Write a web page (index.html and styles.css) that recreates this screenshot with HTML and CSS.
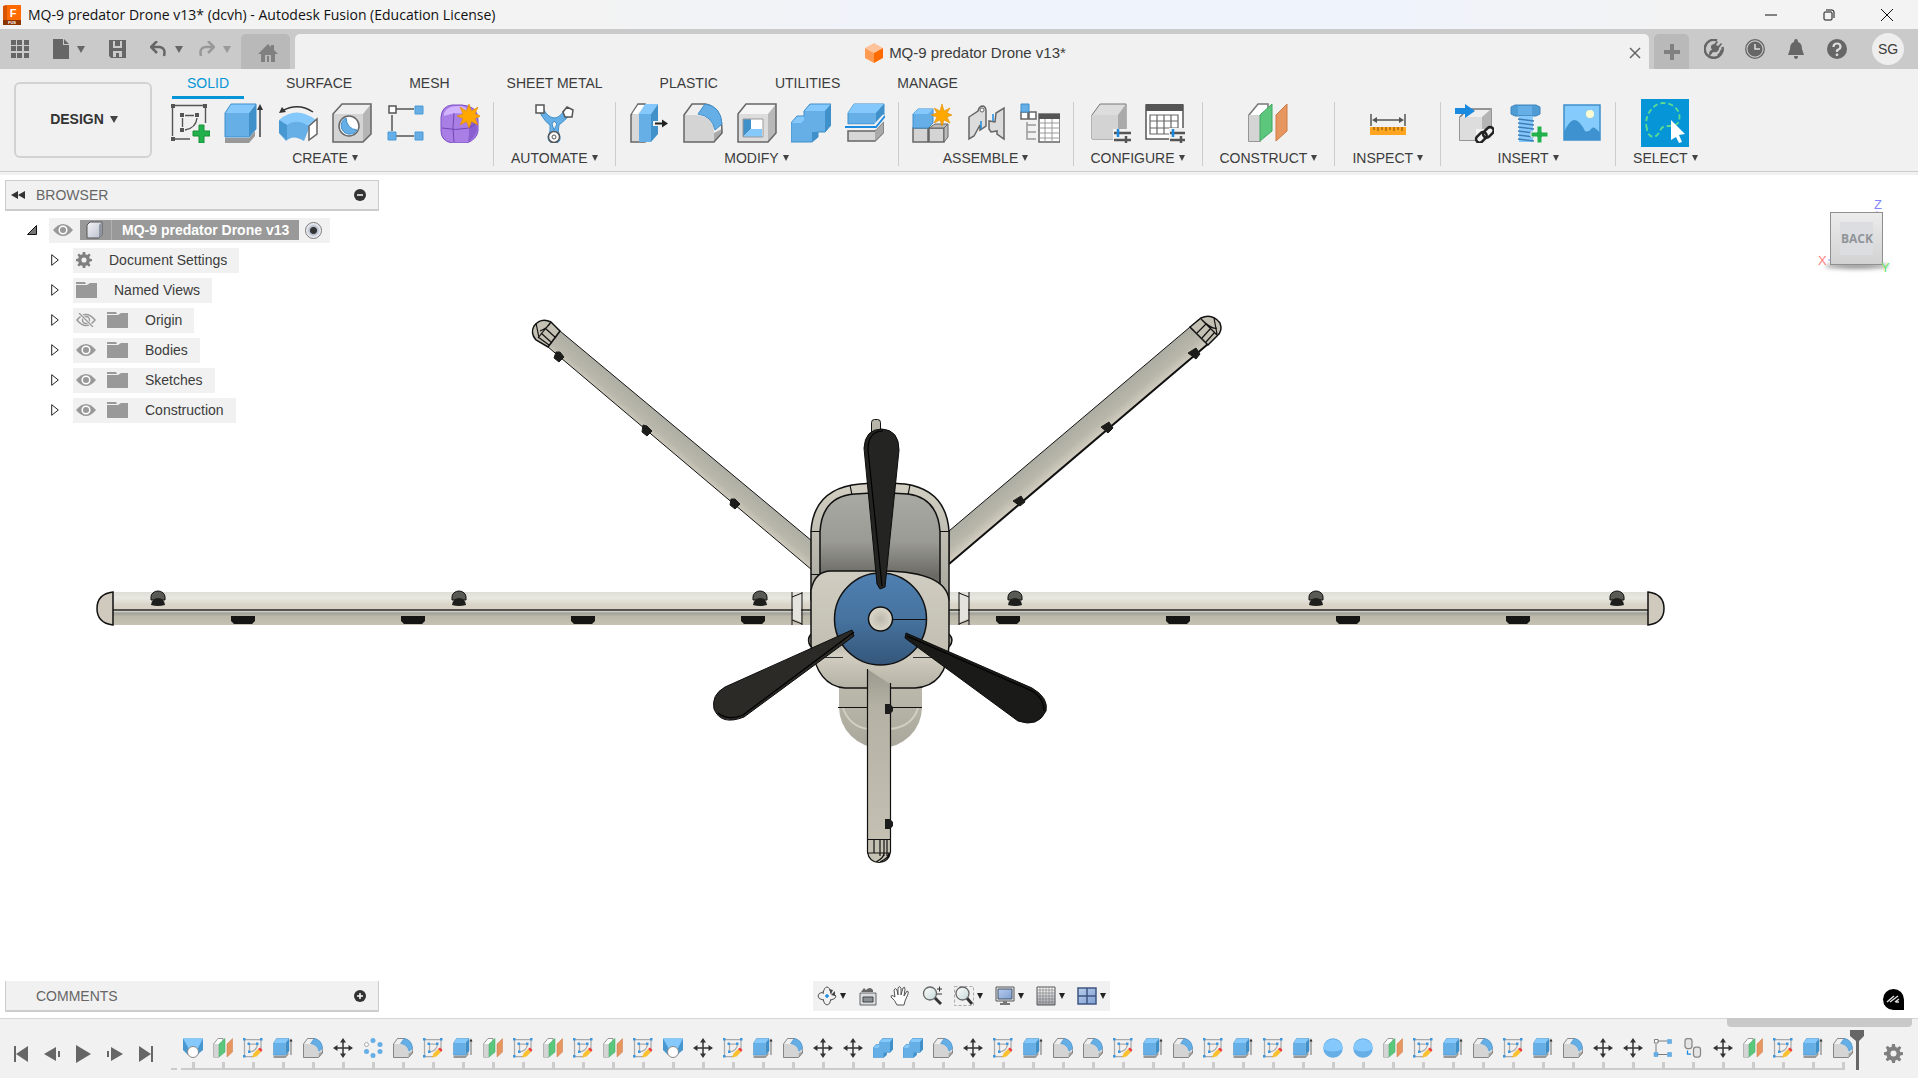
FILE: index.html
```html
<!DOCTYPE html>
<html lang="en">
<head>
    <meta charset="UTF-8">
    <meta name="viewport" content="width=device-width, initial-scale=1.0">
    <title>MQ-9 predator Drone v13* (dcvh) - Autodesk Fusion (Education License)</title>
    <link rel="stylesheet" href="styles.css">
</head>
<body>
    <!-- icon sprite -->
    <svg class="sprite" aria-hidden="true">
        <defs>
            <linearGradient id="gLens" x1="0" y1="0" x2="1" y2="1"><stop offset="0" stop-color="#fff"/><stop offset="1" stop-color="#c3d8d6"/></linearGradient>
            <linearGradient id="gScreen" x1="0" y1="0" x2="1" y2="1"><stop offset="0" stop-color="#b8cdec"/><stop offset="1" stop-color="#7f9fd2"/></linearGradient>
            <linearGradient id="gCube" x1="0" y1="0" x2="1" y2="1"><stop offset="0" stop-color="#f4f5f8"/><stop offset="1" stop-color="#b9bfcc"/></linearGradient>
            <linearGradient id="gGrid" x1="0" y1="0" x2="0" y2="1"><stop offset="0" stop-color="#fff"/><stop offset="1" stop-color="#a5a7b0"/></linearGradient>
        </defs>

        <symbol id="i-sketch" viewBox="0 0 40 40">
            <path d="M5 2.500H33M35.500 5V20M2.500 5V33M5 36H20M15 12.500H24M12.500 15V24M27 15Q26 25 15 27" fill="none" stroke="#555" stroke-width="1.400"/>
            <path d="M1 1h4v4h-4zM33 1h4v4h-4zM1 34h4v4h-4zM10 10h4v4h-4zM25 10h4v4h-4zM10 25h4v4h-4z" fill="#555"/>
            <path d="M29 22h5v6h6v5h-6v7h-5v-7h-6v-5h6z" fill="#22b14c" stroke="#169038"/>
        </symbol>
        <symbol id="i-extrude" viewBox="0 0 40 40">
            <path d="M1 35H25L31 28V33L25 40H1z" fill="#999"/>
            <path d="M1 10H25V34H1z" fill="#65aee6"/><path d="M1 10L7 1H32L25 10z" fill="#85c9fc"/><path d="M25 10L32 1V26L25 34z" fill="#4090ca"/>
            <path d="M1 10L7 1H32V26L25 34H1z" fill="none" stroke="#3f8fcb"/>
            <path d="M36 4V34" stroke="#333" stroke-width="1.400"/><path d="M36 1L39 7H33z" fill="#333"/>
        </symbol>
        <symbol id="i-revolve" viewBox="0 0 40 40">
            <path d="M1 18Q18 6 34 18L30 28L26 38Q15 31 8 38L1 30z" fill="#65aee6"/>
            <path d="M1 17Q18 2 38 17L31 23Q18 15 9 22z" fill="#85c9fc"/>
            <path d="M1 17L9 22V37L1 30z" fill="#4797d1"/>
            <path d="M31 23L39 16V31L31 37z" fill="#fff" stroke="#666" stroke-width="1.500"/>
            <path d="M4 8Q20 -1 35 9" fill="none" stroke="#333" stroke-width="1.500"/><path d="M1 10L4 4L8 9z" fill="#333"/>
        </symbol>
        <symbol id="i-hole" viewBox="0 0 40 40">
            <path d="M1 11L10 1H39V31L31 39H1z" fill="#eee"/><path d="M1 11H31V39H1z" fill="#d4d4d4"/><path d="M31 11L39 1V31L31 39z" fill="#b5b5b5"/>
            <path d="M1 11L10 1H39V31L31 39H1z" fill="none" stroke="#666" stroke-width="1.500"/>
            <circle cx="17" cy="23" r="10" fill="#fff" stroke="#666" stroke-width="1.500"/><path d="M14 15A8.500 8.500 0 1 0 25 27Q15 26 14 15z" fill="#65aee6" stroke="#3f8fcb"/>
        </symbol>
        <symbol id="i-pattern" viewBox="0 0 40 40">
            <path d="M10 6H28M6 12V28M10 33H28" stroke="#555" stroke-width="1.500"/><path d="M3 3h7v7h-7z" fill="#fff" stroke="#555" stroke-width="1.500"/>
            <path d="M29 3h8v8h-8zM2 29h8v8h-8zM29 29h8v8h-8z" fill="#65aee6" stroke="#4a9ad6"/>
        </symbol>
        <symbol id="i-form" viewBox="0 0 40 40">
            <path d="M1 14Q2 3 12 2H22Q38 3 38 17V28Q37 36 27 40H12Q1 38 1 28z" fill="#a97fe6" stroke="#7c4fc4"/>
            <path d="M4 10Q8 2 20 3Q30 4 25 11Q14 9 4 13z" fill="#d1b3ff"/><path d="M26 12Q38 15 37 27Q35 35 28 39Q31 25 26 12z" fill="#8a5fd0"/>
            <path d="M2 25Q16 28 29 25L37 20M14 10Q12 25 14 39" fill="none" stroke="#7346b5"/>
            <path d="M29 1L31.500 8L38 4L35 11L41 13L35 15.500L38 22L31.500 18.500L29 25L26.500 18.500L20 22L23 15.500L17 13L23 11L20 4L26.500 8z" fill="#ffa800" stroke="#e08a00" stroke-width=".6"/>
        </symbol>
        <symbol id="i-automate" viewBox="0 0 40 40">
            <path d="M5 8Q11 19 16 22Q17 28 14 34Q14 40 20 40Q27 40 26 34Q23 28 25 22Q30 18 36 12L30 7Q26 15 20 15Q13 14 9 5z" fill="#65aee6" stroke="#3f8fcb"/>
            <path d="M20 18L23 21L20 27L18 21z" fill="#f1f1f1" stroke="#3f8fcb"/>
            <circle cx="20" cy="34" r="5.500" fill="#fff" stroke="#555" stroke-width="1.500"/><circle cx="20" cy="34" r="2" fill="none" stroke="#555"/>
            <path d="M2 2h8v8h-8zM33 4L39 7L38 14L31 14L29 9z" fill="#fff" stroke="#555" stroke-width="1.500"/>
        </symbol>
        <symbol id="i-press" viewBox="0 0 40 40">
            <path d="M2 12L9 1H16V39H2z" fill="#d8d8d8" stroke="#666" stroke-width="1.500"/><path d="M3 11L9 2H16L9 11z" fill="#fff"/>
            <path d="M10 11H22V39H10z" fill="#65aee6"/><path d="M10 11L16 1H29L22 11z" fill="#85c9fc"/><path d="M22 11L29 1V31L22 39z" fill="#4090ca"/>
            <path d="M24 18h16v5H24z" fill="#f1f1f1"/><path d="M26 20.500H34" stroke="#222" stroke-width="2"/><path d="M33 16.500L39 20.500L33 24.500z" fill="#222"/>
        </symbol>
        <symbol id="i-fillet" viewBox="0 0 40 40">
            <path d="M1 12L9 1H22Q39 4 39 28L31 39H1z" fill="#efefef"/><path d="M1 12H13Q30 13 31 29V39H1z" fill="#d4d4d4"/>
            <path d="M31 30L39 26V30L31 39z" fill="#aaa"/><path d="M1 12L9 1H22Q39 4 39 28V30L31 39H1z" fill="none" stroke="#666" stroke-width="1.500"/>
            <path d="M15 11L22 1Q38 3 39 21L32 27Q29 13 15 11z" fill="#65aee6" stroke="#3f8fcb"/>
        </symbol>
        <symbol id="i-shell" viewBox="0 0 40 40">
            <path d="M1 11L9 1H39V30L31 39H1z" fill="#f5f5f5"/><path d="M1 11H31V39H1z" fill="#dcdcdc"/><path d="M31 11L39 1V30L31 39z" fill="#b8b8b8"/>
            <path d="M1 11L9 1H39V30L31 39H1z" fill="none" stroke="#666" stroke-width="1.500"/>
            <path d="M6 16H26V34H6z" fill="#fff"/><path d="M6 16H14V26L6 34z" fill="#4090ca"/><path d="M14 26H25V34H6z" fill="#85c9fc"/><path d="M6 16H26V34H6z" fill="none" stroke="#999"/>
        </symbol>
        <symbol id="i-combine" viewBox="0 0 40 40">
            <path d="M0 20L6 13H13V8L19 1H40V22L34 29H27V34L21 39H0z" fill="#65aee6"/>
            <path d="M13 8L19 1H40L34 8zM0 20L6 13H13V17L10 20z" fill="#85c9fc"/><path d="M34 8L40 1V22L34 29zM21 29H27V34L21 39z" fill="#4090ca"/>
            <path d="M0 20L6 13H13V8L19 1H40V22L34 29H27V34L21 39H0z" fill="none" stroke="#3f8fcb"/>
        </symbol>
        <symbol id="i-split" viewBox="0 0 40 40">
            <path d="M3 28H30L38 20V30L30 38H3z" fill="#d6d6d6" stroke="#666" stroke-width="1.500"/><path d="M30 28L38 20V30L30 38z" fill="#aaa"/>
            <path d="M3 10L9 1H39V13L31 21H3z" fill="#65aee6" stroke="#3f8fcb"/><path d="M3 10L9 1H39L31 10z" fill="#85c9fc"/><path d="M31 10L39 1V13L31 21z" fill="#4090ca"/>
            <path d="M0 24H30L40 13" fill="none" stroke="#f1f1f1" stroke-width="5"/><path d="M0 24H31L40 13" fill="none" stroke="#1a8ae0" stroke-width="1.800"/>
        </symbol>
        <symbol id="i-component" viewBox="0 0 40 40">
            <path d="M1 25H16V39H1zM17 25H32V39H17z" fill="#d4d4d4" stroke="#666" stroke-width="1.500"/><path d="M17 25L23 21H36L32 25zM32 25L36 21V34L32 39z" fill="#bbb" stroke="#666"/>
            <path d="M1 11L6 6H21V20L16 25H1z" fill="#65aee6" stroke="#3f8fcb"/><path d="M1 11L6 6H21L16 11z" fill="#85c9fc"/>
            <path d="M30 1L32 8L38 5L35 10L40 12L35 14L38 20L32 17L30 23L28 17L22 20L25 14L19 12L25 10L22 5L28 8z" fill="#ffa800" stroke="#e08a00" stroke-width=".6"/>
        </symbol>
        <symbol id="i-joint" viewBox="0 0 40 40">
            <path d="M3 14L12 8Q13 3 17 3Q20 4 20 8V23L14 27V22L8 33L3 36z" fill="#dcdcdc" stroke="#666" stroke-width="1.500"/><circle cx="16" cy="7" r="2" fill="#fff" stroke="#666"/>
            <path d="M38 5V36L31 31V28L25 29L23 26V18L29 19L30 10z" fill="#dcdcdc" stroke="#666" stroke-width="1.500"/><path d="M15 18V26M27 11V18" stroke="#1a8ae0" stroke-width="1.500"/>
        </symbol>
        <symbol id="i-bom" viewBox="0 0 40 40">
            <path d="M1 9H8V16H1zM9 9H16V16H9z" fill="#fff" stroke="#666" stroke-width="1.500"/><path d="M1 1H9V9H1z" fill="#65aee6" stroke="#3f8fcb"/>
            <path d="M7 19V36H16M7 22H16M7 29H16" fill="none" stroke="#999" stroke-width="1.500"/><path d="M19 11H40V39H19z" fill="#fff" stroke="#666" stroke-width="1.500"/><path d="M19 11H40V16H19z" fill="#555"/>
            <path d="M25 16V39M32 16V39M19 20H40M19 25H40M19 30H40M19 35H40" stroke="#999"/>
        </symbol>
        <symbol id="i-config" viewBox="0 0 40 40">
            <path d="M1 12L9 1H35V28L27 36H1z" fill="#ddd" stroke="#777"/><path d="M1 12H27V36H1z" fill="#d3d3d3"/><path d="M27 12L35 1V28L27 36z" fill="#aaa"/>
            <path d="M22 26h18v14H22z" fill="#f1f1f1"/><path d="M23 30H40M23 37H40M35 33V40" stroke="#555" stroke-width="2.500"/><path d="M27 26V34" stroke="#1a8ae0" stroke-width="2.500"/>
        </symbol>
        <symbol id="i-configtable" viewBox="0 0 40 40">
            <path d="M1 2H38V36H1z" fill="#fff" stroke="#555" stroke-width="1.500"/><path d="M1 1H38V8H1z" fill="#555"/><path d="M5 12H33V31H5zM5 18H33M5 25H33M12 12V31M19 12V31M26 12V31" fill="none" stroke="#666" stroke-width="1.200"/>
            <path d="M24 25h16v15H24z" fill="#f1f1f1"/><path d="M25 30H41M25 37H41M36 33V40" stroke="#555" stroke-width="2.500"/><path d="M28 26V34" stroke="#1a8ae0" stroke-width="2.500"/>
        </symbol>
        <symbol id="i-plane" viewBox="0 0 40 40">
            <path d="M1 12L10 1H20V12L12 38H1z" fill="#fff" stroke="#777" stroke-width="1.500"/><path d="M1 12H12V38H1z" fill="#d4d4d4"/>
            <path d="M12 12L24 1V28L12 38z" fill="#5cc67d" stroke="#3fa860"/><path d="M28 12L39 1V28L28 38z" fill="#e8965f" stroke="#cc7a45"/>
        </symbol>
        <symbol id="i-measure" viewBox="0 0 40 40">
            <path d="M3 11V23M37 11V23M6 17H34" stroke="#555" stroke-width="1.500"/><path d="M4 17L9 14V20zM36 17L31 14V20z" fill="#555"/>
            <path d="M2 24H38V32H2z" fill="#ffa51f"/><path d="M6 24v3M10 24v4M14 24v3M18 24v4M22 24v3M26 24v4M30 24v3M34 24v4" stroke="#7a4d00"/>
        </symbol>
        <symbol id="i-insert" viewBox="0 0 40 40">
            <path d="M6 14L14 6H37V28L28 37H6z" fill="#eee" stroke="#777" stroke-width="1.500"/><path d="M6 14H28V37H6z" fill="#ddd"/><path d="M28 14L37 6V28L28 37z" fill="#b5b5b5"/>
            <path d="M1 5H11V1L21 8L11 15V11H1z" fill="#1a8ae0"/>
            <path d="M22 26h18v14H22z" fill="#f1f1f1"/><g fill="none" stroke="#222" stroke-width="2.600"><rect x="21" y="31" width="12" height="7" rx="3.500" transform="rotate(-45 27 34)"/><rect x="28" y="26" width="12" height="7" rx="3.500" transform="rotate(-45 34 29)"/></g>
        </symbol>
        <symbol id="i-bolt" viewBox="0 0 40 40">
            <path d="M3 4L7 2H28L32 4V11L28 13H7L3 11z" fill="#4f9bd3" stroke="#3f85bd"/><path d="M10 3H24V12H10z" fill="#65aee6"/><path d="M11 13H25V39H11z" fill="#85c9fc"/>
            <path d="M10 16L26 18M10 20L26 22M10 24L26 26M10 28L26 30M10 32L26 34M10 36L26 38" stroke="#3f7eb5" stroke-width="1.500"/>
            <path d="M29 23h5v6h6v5h-6v6h-5v-6h-6v-5h6z" fill="#22b14c" stroke="#f1f1f1"/>
        </symbol>
        <symbol id="i-picture" viewBox="0 0 40 40">
            <path d="M2 2H38V37H2z" fill="#85cbfc" stroke="#3f8fcb" stroke-width="1.500"/><path d="M2 29Q8 16 13 17Q18 18 23 28Q26 30 30 25Q32 23 38 30V37H2z" fill="#3d92cf"/><circle cx="28" cy="11" r="4" fill="#fffbd0"/>
        </symbol>
        <symbol id="i-select" viewBox="0 0 48 48">
            <path d="M0 0H48V48H0z" fill="#0696d7"/><path d="M6 30C2 18 12 4 22 4C34 4 42 14 37 24C32 30 24 24 20 30C14 44 6 36 6 30z" fill="none" stroke="#5fdc8f" stroke-width="1.800" stroke-dasharray="5 3"/>
            <path d="M30 21L44 35L38 36L41 43L38 44L35 38L30 41z" fill="#fff"/>
        </symbol>

        <!-- timeline only -->
        <symbol id="i-tsketch" viewBox="0 0 40 40">
            <path d="M2 3H36V22M3 3V37H22M10 12H30M13 12V28Q28 26 29 12" fill="none" stroke="#aaa" stroke-width="2.500"/>
            <path d="M0 0h5v5h-5zM34 0h5v5h-5zM0 34h5v5h-5zM9 9h5v5h-5zM26 9h5v5h-5zM10 25h5v5h-5z" fill="#3b98e0"/>
            <path d="M18 39L21 31L30 22L36 28L27 37z" fill="#fbc02d"/><path d="M30 22L34 19L39 24L36 28z" fill="#f03c3c"/>
        </symbol>
        <symbol id="i-loft" viewBox="0 0 40 40">
            <path d="M0 1H40V24L28 34H10L0 24z" fill="#4797d1"/><path d="M0 1H40L29 22H12z" fill="#85c9fc"/><circle cx="20" cy="28" r="11" fill="#fff" stroke="#888" stroke-width="2"/>
        </symbol>
        <symbol id="i-move" viewBox="0 0 40 40">
            <path d="M20 5V35M5 20H35" stroke="#333" stroke-width="3"/><path d="M20 0L26 9H14zM20 40L14 31H26zM0 20L9 14V26zM40 20L31 26V14z" fill="#333"/>
        </symbol>
        <symbol id="i-circ" viewBox="0 0 40 40">
            <g fill="#65aee6"><circle cx="20" cy="5" r="5"/><circle cx="34" cy="13" r="5"/><circle cx="34" cy="27" r="5"/><circle cx="20" cy="35" r="5"/><circle cx="7" cy="27" r="5"/></g><circle cx="7" cy="13" r="4" fill="#fff" stroke="#aaa" stroke-width="2"/>
        </symbol>
        <symbol id="i-dome" viewBox="0 0 40 40">
            <circle cx="20" cy="20" r="19.500" fill="#65aee6"/><path d="M0.500 22A19.500 19.500 0 0 1 39.500 22Q20 32 0.500 22z" fill="#85c9fc"/>
        </symbol>
        <symbol id="i-align" viewBox="0 0 40 40">
            <rect x="4" y="1" width="14" height="20" rx="5" fill="#e5e5e5" stroke="#888" stroke-width="2.500"/><rect x="21" y="18" width="14" height="20" rx="5" fill="#e5e5e5" stroke="#888" stroke-width="2.500"/>
            <path d="M9 25V32H16" fill="none" stroke="#1a8ae0" stroke-width="2.500"/>
        </symbol>

        <symbol id="i-gear" viewBox="0 0 20 20">
            <path fill-rule="evenodd" d="M8.500 0H11.500L12 3L14 3.900L16.400 2L18.300 4L16.500 6.300L17.200 8.300L20 8.600V11.500L17.200 12L16.400 14L18.200 16.400L16.200 18.300L13.900 16.600L12 17.300L11.500 20H8.500L8 17.300L6 16.500L3.700 18.200L1.700 16.200L3.500 13.900L2.700 12L0 11.500V8.600L2.700 8.200L3.500 6.200L1.800 3.900L3.800 1.900L6.100 3.600L8 2.800zM10 6.800A3.200 3.200 0 1 0 10 13.200A3.200 3.200 0 1 0 10 6.800z" fill="currentColor"/>
        </symbol>
        <symbol id="i-eye" viewBox="0 0 20 14">
            <path d="M0 7Q10 -5 20 7Q10 19 0 7z" fill="#999"/><circle cx="10" cy="7" r="3.800" fill="none" stroke="#fff" stroke-width="1.500"/>
        </symbol>
        <symbol id="i-eyeoff" viewBox="0 0 20 14">
            <path d="M1 7Q10 -4 19 7Q10 18 1 7z" fill="none" stroke="#999" stroke-width="1.500"/><circle cx="10" cy="7" r="3.500" fill="none" stroke="#999" stroke-width="1.500"/><path d="M3 0L17 14" stroke="#f1f1f1" stroke-width="3"/><path d="M3 0L17 14" stroke="#999" stroke-width="1.300"/>
        </symbol>
        <symbol id="i-folder" viewBox="0 0 21 16">
            <path d="M0 0H9L10 2H0zM0 3H11L14 1H21V16H0z" fill="#999"/>
        </symbol>
    </svg>

    <header class="titlebar">
        <svg class="app-logo" viewBox="0 0 18 20"><path d="M0 1L5 0H18V20H0z" fill="#ff6b00"/><path d="M0 1L4 0V20H0z" fill="#d95400"/><path d="M0 15H18V20H0z" fill="#8c3500"/><text x="10" y="12" class="logo-f">F</text><text x="9" y="19" class="logo-s">FUS</text></svg>
        <span class="title-text">MQ-9 predator Drone v13* (dcvh) - Autodesk Fusion (Education License)</span>
        <button class="win-button" aria-label="Minimize"><svg viewBox="0 0 12 12"><path d="M0 6H12"/></svg></button>
        <button class="win-button" aria-label="Restore"><svg viewBox="0 0 12 12"><rect x="1" y="3" width="8" height="8" rx="1"/><path d="M3 1H9Q11 1 11 3V9"/></svg></button>
        <button class="win-button" aria-label="Close"><svg viewBox="0 0 12 12"><path d="M0 0L12 12M12 0L0 12"/></svg></button>
    </header>

    <div class="tabbar">
        <div class="quick">
            <button aria-label="Data panel"><svg width="18" height="18" viewBox="0 0 18 18"><path d="M0 0h5v5H0zM6 0h5v5H6zM13 0h5v5h-5zM0 6h5v5H0zM6 6h5v5H6zM13 6h5v5h-5zM0 13h5v5H0zM6 13h5v5H6zM13 13h5v5h-5z" fill="#666"/></svg></button>
            <button class="q-file" aria-label="File"><svg width="16" height="20" viewBox="0 0 16 20"><path d="M0 0H10V6H16V20H0zM11 0L16 5H11z" fill="#666"/></svg><i class="caret"></i></button>
            <button class="q-save" aria-label="Save"><svg width="17" height="18" viewBox="0 0 17 18"><path fill-rule="evenodd" d="M0 0H17V18H2L0 16zM4 1V8H13V1zM4 11V17H13V11z" fill="#666"/><path d="M6 1h5v5H6zM7 13h3v5H7z" fill="#666"/></svg></button>
            <button class="q-undo" aria-label="Undo"><svg width="17" height="16" viewBox="0 0 17 16"><path d="M1 6H10Q16 7 14 15M7 0L1 6L7 12" fill="none" stroke="#666" stroke-width="2.500"/></svg><i class="caret"></i></button>
            <button class="q-redo" aria-label="Redo"><svg width="17" height="16" viewBox="0 0 17 16"><path d="M16 6H7Q1 7 3 15M10 0L16 6L10 12" fill="none" stroke="#999" stroke-width="2.500"/></svg><i class="caret"></i></button>
        </div>
        <button class="home-tab" aria-label="Home"><svg width="20" height="18" viewBox="0 0 20 18"><path d="M10 0L13 3V1H16V6L20 10H17V18H13V11H7V18H3V10H0z" fill="#808080"/><path d="M9 12h2v6H9z" fill="#808080"/></svg></button>
        <div class="doc-tab">
            <div class="doc-name">
                <svg width="18" height="20" viewBox="0 0 18 20"><path d="M9 0L18 5L9 10L0 5z" fill="#ffc39b"/><path d="M0 5L9 10V20L0 15z" fill="#ff9a52"/><path d="M18 5L9 10V20L18 15z" fill="#ff6b00"/></svg>
                <span>MQ-9 predator Drone v13*</span>
            </div>
            <button class="doc-close" aria-label="Close tab"><svg width="12" height="12" viewBox="0 0 12 12"><path d="M1 1L11 11M11 1L1 11" stroke="#666" stroke-width="1.500"/></svg></button>
        </div>
        <button class="new-tab" aria-label="New tab"><svg width="16" height="16" viewBox="0 0 16 16"><path d="M6 0h4v6h6v4h-6v6H6v-6H0V6h6z" fill="#808080"/></svg></button>
        <div class="tray">
            <button aria-label="Extensions"><svg width="20" height="20" viewBox="0 0 20 20"><path d="M13 1.500A9 9 0 1 0 18.500 8" fill="none" stroke="#666" stroke-width="2.500"/><path d="M5 16Q5 11 8 11Q5 6 10 5L13 2L14 3L12 6L14 7L17 4L18 5L15 9Q15 14 9 13L6 17z" fill="#666"/><path d="M14 17Q17 15 18 11" stroke="#666" stroke-width="3" fill="none"/></svg></button>
            <button aria-label="Job status"><svg width="20" height="20" viewBox="0 0 20 20"><circle cx="10" cy="10" r="9.300" fill="none" stroke="#666" stroke-width="1.300"/><circle cx="10" cy="10" r="7.500" fill="#666"/><path d="M10 5V10H15" fill="none" stroke="#ddd" stroke-width="1.500"/></svg></button>
            <button aria-label="Notifications"><svg width="20" height="20" viewBox="0 0 20 20"><path d="M10 0Q12 0 12 3Q16 4 16 10L18 16H2L4 10Q4 4 8 3Q8 0 10 0zM8 17H12Q12 20 10 20T8 17z" fill="#666"/></svg></button>
            <button aria-label="Help"><svg width="20" height="20" viewBox="0 0 20 20"><circle cx="10" cy="10" r="10" fill="#666"/><path d="M6.500 8Q6.500 4.500 10 4.500T13.500 8Q13.500 9.500 10 11.500V13" fill="none" stroke="#ddd" stroke-width="2.200"/><circle cx="10" cy="15.800" r="1.400" fill="#ddd"/></svg></button>
        </div>
        <button class="avatar">SG</button>
    </div>

    <div class="ribbon">
        <button class="workspace">DESIGN <i class="caret"></i></button>
        <div class="ribbon-body">
            <nav class="ribbon-tabs">
                <a href="#" class="active">SOLID</a>
                <a href="#">SURFACE</a>
                <a href="#">MESH</a>
                <a href="#">SHEET METAL</a>
                <a href="#">PLASTIC</a>
                <a href="#">UTILITIES</a>
                <a href="#">MANAGE</a>
            </nav>
            <div class="groups" id="groups"></div>
        </div>
    </div>

    <main class="canvas">
        <svg class="drone" viewBox="90 310 1580 560" role="img" aria-label="Drone model, back view">
            <defs>
                <linearGradient id="wing" x1="0" y1="0" x2="0" y2="1">
                    <stop offset="0" stop-color="#dfddd6"/><stop offset=".18" stop-color="#e8e8e2"/><stop offset=".38" stop-color="#dad5c8"/><stop offset=".53" stop-color="#d6d1c3"/><stop offset=".58" stop-color="#dad8d0"/><stop offset=".64" stop-color="#9fa097"/><stop offset=".74" stop-color="#bbb8aa"/><stop offset="1" stop-color="#c6c1b3"/>
                </linearGradient>
                <linearGradient id="armL" gradientUnits="userSpaceOnUse" x1="690" y1="440" x2="675" y2="458"><stop offset="0" stop-color="#aeaea4"/><stop offset=".6" stop-color="#b9b7ab"/><stop offset="1" stop-color="#d2cdc0"/></linearGradient>
                <linearGradient id="armR" gradientUnits="userSpaceOnUse" x1="1069" y1="429" x2="1085" y2="448"><stop offset="0" stop-color="#acaca2"/><stop offset=".6" stop-color="#b9b7ab"/><stop offset="1" stop-color="#d2cdc0"/></linearGradient>
                <linearGradient id="bay" x1="0" y1="0" x2="0" y2="1"><stop offset="0" stop-color="#aaaaa4"/><stop offset=".5" stop-color="#9b9b95"/><stop offset=".85" stop-color="#6b6a64"/></linearGradient>
                <linearGradient id="rim" x1="0" y1="0" x2="0" y2="1"><stop offset="0" stop-color="#d3cfc3"/><stop offset="1" stop-color="#a7a79d"/></linearGradient>
                <linearGradient id="body" x1="0" y1="0" x2="0" y2="1"><stop offset="0" stop-color="#d0ccc1"/><stop offset=".65" stop-color="#c3c0b3"/><stop offset=".72" stop-color="#d2cec1"/><stop offset="1" stop-color="#b4b2a4"/></linearGradient>
                <linearGradient id="hub" x1="0" y1="0" x2="0" y2="1"><stop offset="0" stop-color="#4f80b1"/><stop offset=".5" stop-color="#46739f"/><stop offset="1" stop-color="#35567a"/></linearGradient>
                <linearGradient id="pod" x1="0" y1="0" x2="0" y2="1"><stop offset="0" stop-color="#bdbaad"/><stop offset="1" stop-color="#a9a79b"/></linearGradient>
                <linearGradient id="boom" x1="0" y1="0" x2="0" y2="1"><stop offset="0" stop-color="#9b998e"/><stop offset=".2" stop-color="#b5b2a5"/><stop offset="1" stop-color="#c6c3b5"/></linearGradient>
                <radialGradient id="cone"><stop offset="0" stop-color="#bdb9ab"/><stop offset="1" stop-color="#dcd8cb"/></radialGradient>
                <g id="knob"><path d="M-7 1V-2A7 6 0 0 1 7 -2V1z" fill="#5a5a55" stroke="#111"/><path d="M-7 6Q-6 -1 0 -1T7 6Q0 8 -7 6z" fill="#1e1e1c"/></g>
                <path id="pad" d="M-12 0H12V5L9 8H-9L-12 5z" fill="#151613"/>
            </defs>

            <!-- wings -->
            <rect x="113" y="592" width="698" height="33" fill="url(#wing)"/>
            <rect x="949" y="592" width="699" height="33" fill="url(#wing)"/>
            <path d="M113 610H811M949 610H1648" stroke="#2a2a28" stroke-width="1.500"/>
            <path d="M113 592V625Q97 623 97 608.500T113 592zM1648 592V625Q1664 623 1664 608.500T1648 592z" fill="#cfcabd" stroke="#111" stroke-width="1.500"/>
            <path d="M792 592V625M802 592V625M959 592V625M969 592V625M792 597L802 593M792 620L802 624M969 597L959 593M969 620L959 624" stroke="#111"/>
            <path d="M793 598L801 595V622L793 619zM968 598L960 595V622L968 619z" fill="#e4e3dd"/>
            <use href="#knob" x="158" y="599"/><use href="#knob" x="459" y="599"/><use href="#knob" x="760" y="599"/>
            <use href="#knob" x="1015" y="599"/><use href="#knob" x="1316" y="599"/><use href="#knob" x="1617" y="599"/>
            <use href="#pad" x="243" y="616"/><use href="#pad" x="413" y="616"/><use href="#pad" x="583" y="616"/><use href="#pad" x="753" y="616"/>
            <use href="#pad" x="1008" y="616"/><use href="#pad" x="1178" y="616"/><use href="#pad" x="1348" y="616"/><use href="#pad" x="1518" y="616"/>

            <!-- tail arms -->
            <path d="M560 331L812 541V570L548 347z" fill="url(#armL)" stroke="#111"/>
            <path d="M560 331L551 322Q541 317 534 326Q530 333 536 340L548 347z" fill="#c4c1b4" stroke="#111" stroke-width="1.500"/>
            <path d="M550 323L538 338M545 328L556 338M541 333L552 343M538 337L549 345M536 323L539 338M540 331Q548 328 551 322" fill="none" stroke="#111" stroke-width="1.200"/>
            <path d="M1190 327L949 531V564L1208 344z" fill="url(#armR)" stroke="#111"/><path d="M949 564L1208 344" stroke="#111" stroke-width="2"/>
            <path d="M1190 327L1201 318Q1212 313 1220 323Q1223 331 1217 336L1208 345z" fill="#c4c1b4" stroke="#111" stroke-width="1.500"/>
            <path d="M1201 319L1217 335M1206 324L1197 333M1211 328L1202 338M1215 332L1206 342M1214 318L1217 334M1201 319Q1212 330 1217 328" fill="none" stroke="#111" stroke-width="1.200"/>
            <path d="M556 352L560 352L564 357L559 362L554 358zM643 425L647 426L652 431L647 436L642 432zM731 499L735 499L740 504L735 509L730 505zM1188 353L1196 348L1200 354L1196 359zM1101 427L1109 422L1113 428L1108 433zM1013 501L1021 496L1025 502L1020 506z" fill="#1c1d1a" stroke="#1c1d1a"/>

            <!-- pod and fuselage -->
            <path d="M839 685H922V707A41.500 41 0 0 1 839 707z" fill="url(#pod)"/>
            <path d="M843 708Q850 727 868 729M890 729Q912 727 918 708" fill="none" stroke="#d2cfc3" stroke-width="2"/>
            <path d="M838 707.500H922" stroke="#111"/>
            <path d="M811 634Q806 640 811 647M949 634Q955 640 949 647" fill="#b5b2a5" stroke="#111" stroke-width="1.500"/>
            <rect x="871.500" y="419.500" width="9" height="30" rx="3" fill="#b7b5a9" stroke="#111"/>
            <path d="M811 600V531Q814 488 860 484Q880 482 905 484Q946 490 949 531V600z" fill="url(#rim)" stroke="#111" stroke-width="1.500"/>
            <path d="M820 580V532Q822 496 855 494Q880 492 908 494Q938 498 940 532V590z" fill="url(#bay)" stroke="#111" stroke-width="1.500"/>
            <path d="M811 531.500H820M940 531.500H949M811 574.500H820M850 485L852 495M910 485L908 495" stroke="#111" stroke-width="1.200"/>
            <path d="M811 590Q815 571 831 571H885Q946 572 949 600V645Q947 686 915 688H845Q817 686 811 645z" fill="url(#body)" stroke="#111" stroke-width="1.500"/>
            <path d="M823 657.500H843M913 657.500H940" stroke="#333"/>

            <!-- lower boom -->
            <path d="M867 669L890 684V853Q889 863 879 863T867 853z" fill="url(#boom)"/>
            <path d="M867.500 669V852Q869 862 879 862.500Q889 862 890.500 852V683M867 839.500H890M867 853H890M874 839V853M880 839V856M884 839V856M887 839V856M876 862Q884 858 884 853M880 862Q889 858 889 853" fill="none" stroke="#111" stroke-width="1.200"/>
            <path d="M885 704H890L893 707V711L890 714H885zM885 819H890L893 822V826L890 829H885z" fill="#1c1d1a"/>

            <!-- propeller -->
            <circle cx="880.500" cy="619" r="46" fill="url(#hub)" stroke="#111" stroke-width="1.500"/>
            <path d="M892 619.500H926" stroke="#111"/>
            <circle cx="880.500" cy="619" r="12" fill="url(#cone)" stroke="#111" stroke-width="1.500"/>
            <path d="M864 448Q865 429 882 429Q899 430 899 450L885 587L880 589L877 584z" fill="#242422" stroke="#0c0c0c"/>
            <path d="M868 450Q868 431 883 431M868 450L882 586" fill="none" stroke="#000" stroke-width="1.200"/>
            <path d="M852 630L725 687Q711 695 714 709Q721 726 744 717L854 636z" fill="#2b2a27" stroke="#0c0c0c"/>
            <path d="M854 632L743 715Q728 721 718 713" fill="none" stroke="#000" stroke-width="1.200"/>
            <path d="M906 633L1032 688Q1049 698 1046 711Q1038 728 1018 721L905 638z" fill="#1a1a18" stroke="#0c0c0c"/>
            <path d="M907 636L1032 691Q1044 698 1044 711" fill="none" stroke="#000" stroke-width="1.200"/>
        </svg>

        <svg class="viewcube" viewBox="0 0 90 90" role="img" aria-label="View cube">
            <defs><linearGradient id="face" x1="0" y1="0" x2="0" y2="1"><stop offset="0" stop-color="#ececec"/><stop offset="1" stop-color="#d2d2d2"/></linearGradient><filter id="soft" x="-20%" width="140%" y="-100%" height="300%"><feGaussianBlur stdDeviation="2"/></filter></defs>
            <ellipse cx="42" cy="71" rx="32" ry="3" fill="#999" filter="url(#soft)"/>
            <path d="M62 16V20M13 65h4" stroke="#99f"/>
            <rect x="15.500" y="17.500" width="52" height="52" fill="url(#face)" stroke="#8f8f8f"/>
            <rect x="25" y="27" width="33" height="33" fill="#dcdde0"/>
            <text x="42" y="48" class="face">BACK</text>
            <text x="59" y="14" fill="#8585ff">Z</text><text x="3" y="70" fill="#ff8080">X</text><text x="66" y="77" fill="#6be86b">Y</text>
        </svg>

        <aside class="browser">
            <div class="panel-head">
                <button class="collapse" aria-label="Collapse"><svg width="14" height="8" viewBox="0 0 14 8"><path d="M7 0V8L0 4zM14 0V8L7 4z" fill="#333"/></svg></button>
                <h2>BROWSER</h2>
                <button class="round" aria-label="Hide panel"><svg width="12" height="12" viewBox="0 0 12 12"><circle cx="6" cy="6" r="6" fill="#333"/><path d="M3 6H9" stroke="#fff" stroke-width="1.500"/></svg></button>
            </div>
            <div class="node root">
                <button class="twist" aria-label="Collapse"><svg width="10" height="10" viewBox="0 0 10 10"><path d="M9.500 .5V9.500H.5z" fill="#777" stroke="#111"/></svg></button>
                <div class="chip">
                    <button class="eye" aria-label="Toggle visibility"><svg width="20" height="14"><use href="#i-eye"/></svg></button>
                    <div class="root-name">
                        <svg width="17" height="18" viewBox="0 0 17 18"><path d="M1 4L4 1H16V14L13 17H1z" fill="url(#gCube)" stroke="#555"/><path d="M13 17V4L16 1V14z" fill="#8f95a3"/></svg>
                        <span>MQ-9 predator Drone v13</span>
                    </div>
                    <input type="radio" name="active" aria-label="Activate component" checked>
                </div>
            </div>
            <ul class="tree" id="tree"></ul>
        </aside>

        <div class="canvas-foot">
            <div class="comments panel-head">
                <h2>COMMENTS</h2>
                <button class="round" aria-label="Show comments"><svg width="12" height="12" viewBox="0 0 12 12"><circle cx="6" cy="6" r="6" fill="#333"/><path d="M3 6H9M6 3V9" stroke="#fff" stroke-width="1.500"/></svg></button>
            </div>
            <div class="navbar">
                <button aria-label="Orbit"><svg viewBox="0 0 20 20"><g fill="none" stroke="#555"><path d="M6 8Q7 1 10 1T14 8M6 13Q7 19 10 19T14 13"/><path d="M6 6Q1 7 1 10T6 14M14 14Q19 13 19 10L16 7"/></g><path d="M10 8v4M8 10h4" stroke="#1a8ae0" stroke-width="1.500"/><path d="M12 3L16 4L14 8zM14 9L18 5V10z" fill="#444"/></svg><i class="caret"></i></button>
                <button aria-label="Look at"><svg viewBox="0 0 20 20"><path d="M2 7H18V19H2z" fill="#d9dcdf" stroke="#666"/><path d="M5 11H15V16H5z" fill="#8a8f96" stroke="#444"/><path d="M3 6L6 2L8 4Q12 0 15 4V6z" fill="#666"/></svg></button>
                <button aria-label="Pan"><svg viewBox="0 0 20 20"><path d="M7 19Q5 14 1 11Q1 8 5 11L4 4Q5 1 7 4L8 9V2Q9 -1 11 2V9L13 2Q15 0 15 3L14 10L17 5Q19 5 18 8L15 15L14 19z" fill="#fff" stroke="#555"/></svg></button>
                <button aria-label="Zoom"><svg viewBox="0 0 20 20"><path d="M12 11L19 18" stroke="#333" stroke-width="3"/><circle cx="8" cy="7.500" r="6.500" fill="url(#gLens)" stroke="#666" stroke-width="1.300"/><path d="M15 3H20M17.500 .5V5.500M15 8H20" stroke="#333"/></svg></button>
                <button aria-label="Fit"><svg viewBox="0 0 20 20"><path d="M.5 .5H19.500V19.500H.5z" fill="none" stroke="#aaa" stroke-dasharray="3 2"/><path d="M12 11L18 18" stroke="#333" stroke-width="3"/><circle cx="8.500" cy="7.500" r="6.500" fill="url(#gLens)" stroke="#666" stroke-width="1.300"/></svg><i class="caret"></i></button>
                <button aria-label="Display settings"><svg viewBox="0 0 20 20"><path d="M1 1H19V15H1z" fill="#e5e7ea" stroke="#555"/><path d="M3 3H17V13H3z" fill="url(#gScreen)" stroke="#456"/><path d="M8 15H12V17H15V19H5V17H8z" fill="#777"/></svg><i class="caret"></i></button>
                <button aria-label="Grid and snaps"><svg viewBox="0 0 20 20"><path d="M1 1H19V19H1z" fill="url(#gGrid)" stroke="#555"/><path d="M4 1V19M7 1V19M10 1V19M13 1V19M16 1V19M1 4H19M1 7H19M1 10H19M1 13H19M1 16H19" stroke="#777" stroke-width=".6"/></svg><i class="caret"></i></button>
                <button aria-label="Viewports"><svg viewBox="0 0 20 20"><path d="M1 2H19V18H1z" fill="url(#gScreen)" stroke="#3f5580" stroke-width="1.500"/><path d="M10 2V18M1 10H19" stroke="#3f5580" stroke-width="1.500"/></svg><i class="caret"></i></button>
            </div>
            <button class="assistant" aria-label="Autodesk Assistant"><svg width="21" height="21" viewBox="0 0 21 21"><path d="M10.500 0A10.500 10.500 0 0 1 21 10.500V21H10.500A10.500 10.500 0 0 1 10.500 0z" fill="#000"/><path d="M4 13L11 7M7 13L15 7M12 13L16 10M13 13h3" stroke="#ddd" stroke-width="1.500"/></svg></button>
        </div>
    </main>

    <footer class="timeline">
        <div class="playback">
            <button aria-label="Go to start"><svg width="14" height="16" viewBox="0 0 14 16"><path d="M0 0h2v16H0zM14 0V16L2 8z"/></svg></button>
            <button aria-label="Step back"><svg width="16" height="14" viewBox="0 0 16 14"><path d="M12 0V14L0 7zM14 4h2v6h-2z"/></svg></button>
            <button aria-label="Play"><svg width="15" height="18" viewBox="0 0 15 18"><path d="M0 0L15 9L0 18z"/></svg></button>
            <button aria-label="Step forward"><svg width="16" height="14" viewBox="0 0 16 14"><path d="M4 0V14L16 7zM0 4h2v6H0z"/></svg></button>
            <button aria-label="Go to end"><svg width="14" height="16" viewBox="0 0 14 16"><path d="M12 0h2v16h-2zM0 0V16L12 8z"/></svg></button>
        </div>
        <div class="dashes"></div>
        <div class="track" id="track"></div>
        <svg class="marker" width="14" height="40" viewBox="0 0 14 40"><path d="M0 0H14V6L9 11V40H6V11L0 6z" fill="#666"/></svg>
        <button class="settings" aria-label="Timeline settings"><svg width="19" height="19"><use href="#i-gear"/></svg></button>
        <div class="scrollbar"></div>
    </footer>

    <script>
        const groups = [
            ['CREATE', ['sketch', 'extrude', 'revolve', 'hole', 'pattern', 'form']],
            ['AUTOMATE', ['automate']],
            ['MODIFY', ['press', 'fillet', 'shell', 'combine', 'split']],
            ['ASSEMBLE', ['component', 'joint', 'bom']],
            ['CONFIGURE', ['config', 'configtable']],
            ['CONSTRUCT', ['plane']],
            ['INSPECT', ['measure']],
            ['INSERT', ['insert', 'bolt', 'picture']],
            ['SELECT', ['select']]
        ];

        document.getElementById('groups').innerHTML = groups.map(([name, icons]) => `
            <div class="group">
                <div class="group-icons">${icons.map(i => `<button class="tool tool-${i}" aria-label="${i}"><svg><use href="#i-${i}"/></svg></button>`).join('')}</div>
                <button class="group-label">${name} <i class="caret"></i></button>
            </div>`).join('');

        const nodes = [
            ['Document Settings', 'gear', null],
            ['Named Views', 'folder', null],
            ['Origin', 'folder', 'eyeoff'],
            ['Bodies', 'folder', 'eye'],
            ['Sketches', 'folder', 'eye'],
            ['Construction', 'folder', 'eye']
        ];

        document.getElementById('tree').innerHTML = nodes.map(([name, icon, eye]) => `
            <li class="node">
                <button class="twist" aria-label="Expand ${name}"><svg width="8" height="12" viewBox="0 0 8 12"><path d="M.7 .7V11.300L7.300 6z" fill="#fff" stroke="#222"/></svg></button>
                <div class="chip">
                    ${eye ? `<button class="eye" aria-label="Toggle ${name}"><svg width="20" height="14"><use href="#i-${eye}"/></svg></button>` : ''}
                    <svg class="node-icon ${icon}"><use href="#i-${icon}"/></svg><span>${name}</span>
                </div>
            </li>`).join('');

        // one letter per feature in the history
        const features = { l: 'loft', p: 'plane', s: 'tsketch', e: 'extrude', f: 'fillet', m: 'move', c: 'circ', b: 'combine', d: 'dome', r: 'pattern', a: 'align' };
        const history = 'lpsefmcfsepspspslmsefmmbbfmseffsefsesedd' + 'psefsefmmramps' + 'ef';

        document.getElementById('track').innerHTML = [...history].map(k =>
            `<button aria-label="${features[k]}"><svg width="20" height="20"><use href="#i-${features[k]}"/></svg></button>`).join('');
    </script>
</body>
</html>
```
FILE: styles.css
```css
* {
    box-sizing: border-box;
}
body, html {
    margin: 0;
    padding: 0;
    height: 100%;
    overflow: hidden;
}
body {
    display: flex;
    flex-direction: column;
    font-family: "Liberation Sans", Arial, sans-serif;
    font-size: 14px;
    color: #3c3c3c;
    background-color: #fff;
}
button {
    display: flex;
    align-items: center;
    padding: 0;
    border: none;
    background: none;
    font: inherit;
    color: inherit;
    cursor: pointer;
}
svg {
    display: block;
    flex: none;
}
.sprite {
    position: absolute;
    width: 0;
    height: 0;
}
.caret {
    display: inline-block;
    border: 4px solid transparent;
    border-top: 7px solid #444;
    border-bottom: none;
}

/* title bar */
.titlebar {
    display: flex;
    align-items: center;
    height: 29px;
    padding: 0 2px 0 3px;
    background: linear-gradient(90deg, #f3f3f3 30%, #eff3fb 50%, #eff3fb 72%, #f3f3f3 88%);
}
.app-logo {
    width: 18px;
    height: 20px;
}
.logo-f {
    font-size: 11px;
    font-weight: bold;
    fill: #fff;
    text-anchor: middle;
}
.logo-s {
    font-size: 4px;
    font-weight: bold;
    fill: #fff;
    text-anchor: middle;
}
.title-text {
    flex: 1;
    margin-left: 7px;
    font-family: "Open Sans", sans-serif;
    font-size: 14px;
    color: #111;
    white-space: nowrap;
}
.win-button {
    justify-content: center;
    width: 58px;
    height: 29px;
}
.win-button svg {
    width: 12px;
    height: 12px;
    fill: none;
    stroke: #111;
}

/* document tabs */
.tabbar {
    display: flex;
    align-items: flex-end;
    height: 40px;
    background-color: #cacaca;
}
.quick {
    display: flex;
    align-items: center;
    width: 241px;
    height: 40px;
    padding-left: 11px;
}
.quick .caret {
    margin-left: 8px;
    border-top-color: #666;
}
.q-file, .q-save, .q-undo {
    margin-left: 24px;
}
.q-redo {
    margin-left: 15px;
}
.q-redo .caret {
    border-top-color: #999;
}
.home-tab {
    justify-content: center;
    width: 49px;
    height: 35px;
    margin-right: 5px;
    padding-left: 4px;
    padding-top: 3px;
    border-radius: 5px 5px 0 0;
    background-color: #b9b9b9;
}
.doc-tab {
    display: flex;
    align-items: center;
    flex: 1;
    height: 35px;
    padding: 2px 8px 0 7px;
    border-radius: 5px 5px 0 0;
    background-color: #f1f1f1;
}
.doc-name {
    display: flex;
    align-items: center;
    justify-content: center;
    flex: 1;
    gap: 6px;
    font-size: 15px;
}
.new-tab {
    justify-content: center;
    width: 35px;
    height: 35px;
    margin-left: 5px;
    border-radius: 5px 5px 0 0;
    background-color: #b9b9b9;
}
.tray {
    display: flex;
    align-items: center;
    gap: 21px;
    height: 40px;
    margin-left: 15px;
}
.avatar {
    justify-content: center;
    width: 32px;
    height: 32px;
    margin: 0 14px 4px 25px;
    border-radius: 50%;
    background-color: #eee;
}

/* ribbon */
.ribbon {
    display: flex;
    height: 106px;
    padding-left: 14px;
    background-color: #f1f1f1;
    box-shadow: inset 0 -3px 0 #f1f1f1, inset 0 -4px 0 #ccc;
}
.workspace {
    justify-content: center;
    gap: 6px;
    width: 138px;
    height: 76px;
    margin-top: 13px;
    padding: 0 0 2px 2px;
    border: 2px solid #d2d2d2;
    border-radius: 6px;
    font-weight: bold;
    color: #333;
}
.ribbon-body {
    flex: 1;
    margin-left: 5px;
}
.ribbon-tabs {
    display: flex;
    gap: 27px;
    padding-left: 15px;
}
.ribbon-tabs a {
    padding: 7px 15px 6px;
    border-bottom: 3px solid transparent;
    line-height: 14px;
    color: #3c3c3c;
    text-decoration: none;
    white-space: nowrap;
}
.ribbon-tabs a.active {
    border-bottom-color: #0696d7;
    color: #0696d7;
}
.groups {
    display: flex;
}
.group {
    display: flex;
    flex-direction: column;
    justify-content: space-between;
    align-items: center;
    height: 64px;
    margin-top: 3px;
    border-right: 1px solid #ccc;
}
.group:last-child {
    border-right: none;
}
.group-icons {
    display: flex;
    align-items: center;
    gap: 14px;
    height: 42px;
    padding: 0 13px;
}
.tool svg {
    width: 40px;
    height: 40px;
}
.tool-select svg {
    width: 48px;
    height: 48px;
}
.group-label {
    gap: 4px;
    height: 16px;
    padding: 0 17px;
    white-space: nowrap;
}
.group-label .caret {
    border-width: 6px 3px 0;
}

/* model area */
.canvas {
    position: relative;
    display: flex;
    flex-direction: column;
    flex: 1;
    min-height: 0;
    padding-top: 5px;
}
.drone {
    position: absolute;
    left: 90px;
    top: 135px;
    width: 1580px;
    height: 560px;
}
.viewcube {
    position: absolute;
    right: 13px;
    top: 20px;
    width: 90px;
    height: 90px;
    font-size: 13px;
}
.viewcube .face {
    font-family: "Open Sans", sans-serif;
    font-size: 12px;
    font-weight: bold;
    fill: #909499;
    text-anchor: middle;
}
.browser {
    position: relative;
    width: 374px;
    margin-left: 5px;
}
.panel-head {
    display: flex;
    align-items: center;
    height: 31px;
    padding: 0 12px 0 5px;
    border: 1px solid #ccc;
    border-bottom-width: 2px;
    background-color: #f1f1f1;
}
.panel-head h2 {
    flex: 1;
    margin: 0 0 0 11px;
    font-size: 14px;
    font-weight: normal;
    color: #666;
}
.node {
    display: flex;
    align-items: center;
    height: 30px;
}
.root {
    margin-top: 4px;
}
.twist {
    width: 22px;
}
.root .twist {
    margin-left: 22px;
}
.chip {
    display: flex;
    align-items: center;
    height: 25px;
    padding: 0 12px 0 3px;
    background-color: #f1f1f1;
    white-space: nowrap;
}
.root .chip {
    padding: 0 3px 0 4px;
}
.eye {
    margin-right: 11px;
}
.root .eye {
    margin-right: 7px;
}
.root-name {
    display: flex;
    align-items: center;
    height: 20px;
    padding: 0 10px 0 6px;
    background-color: #999;
    font-weight: bold;
    color: #fff;
}
.root-name span {
    margin-left: 8px;
    padding-left: 10px;
    border-left: 1px solid #b0b0b0;
    line-height: 20px;
}
.root input {
    appearance: none;
    width: 17px;
    height: 17px;
    margin: 0 5px 0 6px;
    border: 1px solid #777;
    border-radius: 50%;
    background: radial-gradient(circle, #333 3px, #b4bccb 4px, #fff 8px);
}
.tree {
    margin: 0;
    padding: 0;
    list-style: none;
}
.tree .twist {
    margin-left: 46px;
}
.node-icon {
    width: 21px;
    height: 16px;
    margin-right: 17px;
}
.node-icon.gear {
    width: 16px;
    color: #808080;
}
.canvas-foot {
    display: grid;
    grid-template-columns: 1fr auto 1fr;
    align-items: start;
    margin-top: auto;
    padding: 0 1px 6px 5px;
}
.comments {
    width: 374px;
    border-top: none;
}
.comments h2 {
    margin-left: 25px;
}
.navbar {
    display: flex;
    align-items: center;
    gap: 12px;
    height: 30px;
    padding: 0 4px;
    background-color: #f1f1f1;
}
.navbar svg {
    width: 20px;
    height: 20px;
}
.navbar .caret {
    margin-left: 3px;
    border-width: 6px 3px 0;
    border-top-color: #222;
}
.assistant {
    justify-self: end;
    margin: 8px 13px 0 0;
}

/* timeline */
.timeline {
    position: relative;
    display: flex;
    align-items: flex-start;
    height: 60px;
    padding-left: 14px;
    border-top: 1px solid #d5d5d5;
    background-color: #f1f1f1;
}
.playback {
    display: flex;
    align-items: center;
    gap: 16px;
    width: 157px;
    height: 70px;
    fill: #666;
}
.dashes {
    width: 16px;
    height: 51px;
    border-bottom: 2px dashed #ccc;
}
.track {
    display: flex;
    height: 51px;
    margin-left: -9px;
    padding-top: 19px;
}
.track button {
    flex-direction: column;
    justify-content: space-between;
    width: 30px;
    height: 32px;
    background: linear-gradient(#ccc, #ccc) left bottom / 100% 2px no-repeat;
}
.track button:first-child {
    background-position: right bottom;
    background-size: 22px 2px;
}
.track button:last-child {
    background-size: 16px 2px;
}
.track button::after {
    content: "";
    width: 3px;
    height: 8px;
    background-color: #ccc;
}
.marker {
    margin-top: 11px;
    margin-left: -8px;
}
.settings {
    margin-top: 25px;
    margin-left: 20px;
    color: #808080;
}
.scrollbar {
    position: absolute;
    right: 6px;
    top: -1px;
    width: 185px;
    height: 9px;
    border-radius: 0 0 4px 4px;
    background-color: #c9c9c9;
}
```
